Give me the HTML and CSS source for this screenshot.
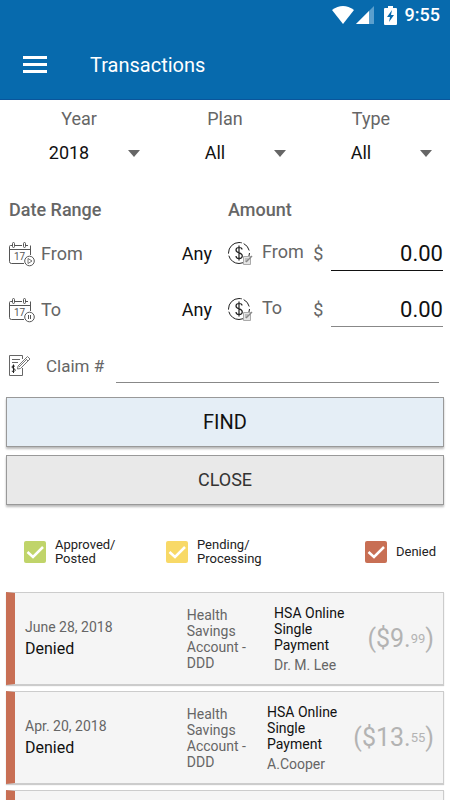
FILE: index.html
```html
<!DOCTYPE html>
<html lang="en">
<head>
<meta charset="utf-8">
<meta name="viewport" content="width=device-width, initial-scale=1">
<title>Transactions</title>
<link rel="stylesheet" href="styles.css">
</head>
<body>
<svg class="sprite" aria-hidden="true">
  <symbol id="calendar" viewBox="0 0 28 26">
    <g fill="none" stroke="#555">
      <path d="M4 4.500H2.500Q1.500 4.500 1.500 5.500V20.500Q1.500 22.500 3.500 22.500H16M7 4.500H14M17 4.500H20M22.500 4.500V14M2 8.500H22"/>
      <rect x="4.500" y="1.500" width="2" height="5" rx="1"/>
      <rect x="15.500" y="1.500" width="2" height="5" rx="1"/>
      <circle cx="21.500" cy="20" r="4.800" fill="#fff"/>
    </g>
  </symbol>
  <symbol id="coin" viewBox="0 0 26 26">
    <g fill="none" stroke="#222">
      <circle cx="12" cy="12" r="10.500" stroke-dasharray="30 2 20 2 9 3"/>
      <path d="M15 8.500Q15 6.500 12 6.500Q9 6.500 9 9Q9 11 12 11.800Q15.300 12.700 15.300 15Q15.300 17.500 12 17.500Q9 17.500 9 15M12 4.500V19.500" stroke-width="1.200"/>
    </g>
    <path d="M16.500 15.500H23.500V23.500H16.500Z" fill="#e4e4e4" stroke="#aaa"/>
    <path d="M18 18H21M18 20H20" stroke="#999"/>
    <path d="M19 21L25 15" stroke="#888" stroke-width="1.500"/>
  </symbol>
</svg>

<header class="top">
  <div class="status">
    <svg width="22" height="18" viewBox="0 0 22 18" aria-hidden="true"><path d="M0 4Q11-4 22 4L11 18Z" fill="#fff"/></svg>
    <svg width="18" height="18" viewBox="0 0 18 18" aria-hidden="true"><path d="M0 18L18 0V18Z" fill="#5b9fcd"/><path d="M0 18L13 5V18Z" fill="#fff"/></svg>
    <svg class="battery" width="13" height="19" viewBox="0 0 13 19" aria-hidden="true"><path d="M4 0H9V2H12Q13 2 13 3V18Q13 19 12 19H1Q0 19 0 18V3Q0 2 1 2H4Z" fill="#fff"/><path d="M8 4L3 11H6L5 16L10 9H7Z" fill="#076aad"/></svg>
    <span class="clock">9:55</span>
  </div>
  <div class="bar">
    <button class="menu" type="button" aria-label="Menu"><svg width="24" height="17" viewBox="0 0 24 17"><path d="M0 1.500H24M0 8.500H24M0 15.500H24" stroke="#fff" stroke-width="3"/></svg></button>
    <h1>Transactions</h1>
  </div>
</header>

<main>
  <form class="filters">
    <div class="pickers">
      <div class="picker">
        <label for="year">Year</label>
        <div class="pick"><select id="year"><option>2018</option></select><svg width="12" height="7" viewBox="0 0 12 7" aria-hidden="true"><path d="M0 0H12L6 7Z" fill="#666"/></svg></div>
      </div>
      <div class="picker">
        <label for="plan">Plan</label>
        <div class="pick"><select id="plan"><option>All</option></select><svg width="12" height="7" viewBox="0 0 12 7" aria-hidden="true"><path d="M0 0H12L6 7Z" fill="#666"/></svg></div>
      </div>
      <div class="picker">
        <label for="type">Type</label>
        <div class="pick"><select id="type"><option>All</option></select><svg width="12" height="7" viewBox="0 0 12 7" aria-hidden="true"><path d="M0 0H12L6 7Z" fill="#666"/></svg></div>
      </div>
    </div>

    <div class="ranges">
      <h2>Date Range</h2>
      <h2>Amount</h2>
      <div class="field date">
        <svg width="28" height="26" viewBox="0 0 28 26" aria-hidden="true"><use href="#calendar"/><text x="6" y="19" font-size="10" fill="#555">17</text><path d="M20 17.500L24 20L20 22.500Z" fill="none" stroke="#555" stroke-width=".8"/></svg>
        <span id="date-from">From</span>
        <button class="any" type="button" aria-describedby="date-from">Any</button>
      </div>
      <div class="field amount">
        <svg width="26" height="26" viewBox="0 0 26 26" aria-hidden="true"><use href="#coin"/></svg>
        <label for="min">From</label>
        <span class="currency">$</span>
        <input class="active" id="min" type="text" value="0.00">
      </div>
      <div class="field date">
        <svg width="28" height="26" viewBox="0 0 28 26" aria-hidden="true"><use href="#calendar"/><text x="6" y="19" font-size="10" fill="#555">17</text><path d="M20.500 18V22M22.500 18V22" stroke="#555"/></svg>
        <span id="date-to">To</span>
        <button class="any" type="button" aria-describedby="date-to">Any</button>
      </div>
      <div class="field amount">
        <svg width="26" height="26" viewBox="0 0 26 26" aria-hidden="true"><use href="#coin"/></svg>
        <label for="max">To</label>
        <span class="currency">$</span>
        <input id="max" type="text" value="0.00">
      </div>
    </div>

    <div class="field claim">
      <svg width="24" height="24" viewBox="0 0 24 24" aria-hidden="true">
        <path d="M14.500 14V21.500H1.500V1.500H14.500V5M4 5.500H12M4 8.500H10" fill="none" stroke="#666"/>
        <path d="M10 12L19.500 2.500L22 5L12.500 14.500L9.500 15ZM17.500 4.500L20 7M11 13L19 5" fill="#fff" stroke="#777"/>
        <path d="M6.800 12.200Q4 11 4 13Q4 14 5.500 14.400Q7.300 15 7.200 16.400Q6.800 18.200 3.800 17.200M5.500 10.500V19" fill="none" stroke="#222"/>
      </svg>
      <label for="claim">Claim #</label>
      <input id="claim" type="text">
    </div>

    <button class="action find" type="button">FIND</button>
    <button class="action close" type="button">CLOSE</button>

    <div class="states">
      <label class="state approved"><input type="checkbox" checked><svg class="tick" viewBox="0 0 22 22" aria-hidden="true"><path d="M3.500 11L9 16L19 6" fill="none" stroke="#fff" stroke-width="2.500"/></svg><span>Approved/<br>Posted</span></label>
      <label class="state pending"><input type="checkbox" checked><svg class="tick" viewBox="0 0 22 22" aria-hidden="true"><path d="M3.500 11L9 16L19 6" fill="none" stroke="#fff" stroke-width="2.500"/></svg><span>Pending/<br>Processing</span></label>
      <label class="state denied"><input type="checkbox" checked><svg class="tick" viewBox="0 0 22 22" aria-hidden="true"><path d="M3.500 11L9 16L19 6" fill="none" stroke="#fff" stroke-width="2.500"/></svg><span>Denied</span></label>
    </div>
  </form>

  <ul class="list">
    <li class="card">
      <div class="when"><span class="day">June 28, 2018</span><span class="result">Denied</span></div>
      <div class="account">Health Savings Account - DDD</div>
      <div class="detail"><span class="kind">HSA Online Single Payment</span><span class="who">Dr. M. Lee</span></div>
      <div class="sum">($9.<span class="cents">99</span>)</div>
    </li>
    <li class="card">
      <div class="when"><span class="day">Apr. 20, 2018</span><span class="result">Denied</span></div>
      <div class="account">Health Savings Account - DDD</div>
      <div class="detail"><span class="kind">HSA Online Single Payment</span><span class="who">A.Cooper</span></div>
      <div class="sum">($13.<span class="cents">55</span>)</div>
    </li>
    <li class="card"></li>
  </ul>
</main>
</body>
</html>
```
FILE: styles.css
```css
* {
  box-sizing: border-box;
}

body {
  margin: 0;
  height: 100vh;
  overflow: hidden;
  background: #fff;
  color: #666;
  font-family: Roboto, "Liberation Sans", sans-serif;
  font-size: 18px;
  line-height: 24px;
}

button,
input,
select {
  margin: 0;
  padding: 0;
  border: 0;
  background: none;
  color: #111;
  font: inherit;
}

h1,
h2,
ul {
  margin: 0;
  padding: 0;
}

.sprite {
  position: absolute;
  width: 0;
  height: 0;
}

.top {
  background: #076aad;
  border-bottom: 1px solid #0a559b;
  color: #fff;
}

.status {
  display: flex;
  align-items: center;
  justify-content: flex-end;
  gap: 2px;
  height: 30px;
  padding-right: 10px;
}

.battery {
  margin: 0 6px 0 8px;
}

.clock {
  font-weight: 500;
}

.bar {
  display: flex;
  align-items: center;
  gap: 43px;
  height: 69px;
  padding: 0 23px;
}

.menu {
  display: flex;
}

h1 {
  font-size: 20px;
  font-weight: 400;
}

main {
  padding: 0 6px;
}

.pickers {
  display: grid;
  grid-template-columns: repeat(3, 1fr);
  padding-top: 7px;
}

.picker label {
  display: block;
  text-align: center;
}

.pick {
  display: grid;
  grid-template-columns: 1fr 12px;
  align-items: center;
  height: 44px;
  padding-right: 12px;
}

.pick select {
  grid-column: 1 / -1;
  grid-row: 1;
  height: 44px;
  padding-right: 8px;
  appearance: none;
  text-align: center;
  text-align-last: center;
}

.pick svg {
  grid-column: 2;
  grid-row: 1;
  pointer-events: none;
}

.ranges {
  display: grid;
  grid-template-columns: repeat(2, minmax(0, 1fr));
  grid-template-rows: 51px 56px 56px;
  align-items: center;
}

h2 {
  padding: 18px 3px 0;
  font-size: 18px;
  font-weight: 500;
}

.field {
  display: flex;
  align-items: center;
  height: 56px;
}

.date {
  padding: 0 13px 0 2px;
  gap: 5px;
}

.any {
  margin-left: auto;
}

.amount svg {
  margin-left: 2px;
}

.amount label {
  flex: 1;
  padding: 0 0 4px 9px;
}

.currency {
  padding-right: 8px;
}

.field input {
  height: 34px;
  min-width: 0;
  border-bottom: 1px solid #888;
  border-radius: 0;
  font-size: 22px;
  text-align: right;
}

.field input.active {
  border-color: #111;
}

.amount input {
  flex: 0 0 51%;
  margin-right: 1px;
}

.claim {
  padding: 0 5px 0 2px;
}

.claim label {
  padding: 0 12px 0 14px;
  font-size: 17px;
}

.claim input {
  flex: 1;
}

.action {
  display: block;
  width: 100%;
  height: 50px;
  margin-top: 3px;
  border: 1px solid #999;
  box-shadow: 0 2px 2px #bbb;
}

.find {
  background: #e5eef6;
  font-size: 20px;
}

.close {
  margin-top: 8px;
  background: #e9e9e9;
  color: #333;
}

.states {
  display: flex;
  align-items: center;
  height: 87px;
  padding: 6px 8px 0 18px;
  color: #222;
  font-size: 13px;
  line-height: 14px;
}

.state {
  display: grid;
  grid-template-columns: 22px auto;
  align-items: center;
  column-gap: 9px;
}

.state input,
.tick {
  grid-column: 1;
  grid-row: 1;
  width: 22px;
  height: 22px;
}

.state input {
  appearance: none;
  border-radius: 2px;
}

.tick {
  position: relative;
  pointer-events: none;
}

.approved {
  flex: 0 0 142px;
}

.approved,
.pending {
  justify-content: start;
}

.denied {
  margin-left: auto;
}

.approved input {
  background: #c0d46a;
}

.pending input {
  background: #f8d967;
}

.denied input {
  background: #c86f54;
}

.list {
  display: grid;
  gap: 6px;
  list-style: none;
}

.card {
  display: flex;
  align-items: center;
  min-height: 93px;
  padding-right: 9px;
  border: 1px solid #ccc;
  border-left: 9px solid #c86f54;
  box-shadow: 0 1px 1px #ccc;
  background: #f5f5f5;
  font-size: 14px;
  line-height: 16px;
}

.when {
  flex: 0 0 41%;
  padding-left: 10px;
}

.when span,
.detail span {
  display: block;
}

.result {
  margin-top: 4px;
  color: #111;
  font-size: 16px;
  line-height: 20px;
}

.account {
  flex: 0 0 66px;
}

.detail {
  flex: 0 0 72px;
  margin: 0 auto;
}

.kind {
  color: #111;
}

.who {
  margin-top: 4px;
}

.sum {
  color: #b3b3b3;
  font-size: 25px;
  line-height: 30px;
}

.cents {
  font-size: 13px;
  vertical-align: 4px;
}
```
